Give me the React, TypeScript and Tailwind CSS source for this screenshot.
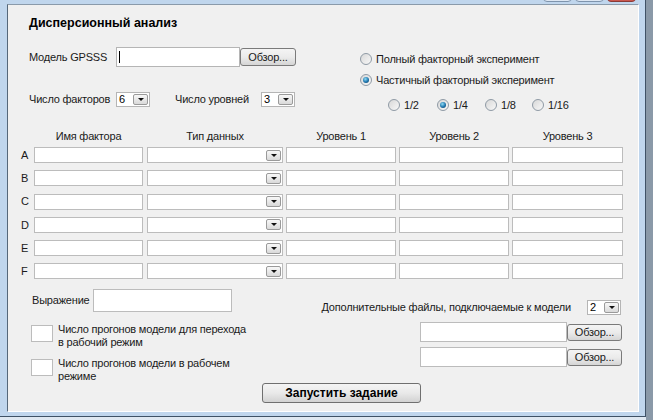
import React from "react";

const font = "font-['Liberation_Sans',Arial,sans-serif]";

function DropBtn() {
    return (
        <div className="w-[15px] h-[11px] mr-[1px] ml-auto border border-[#9a9a9a] rounded-[2px] bg-linear-to-b from-[#f8f8f8] to-[#d9d9d9] flex items-center justify-center">
            <div className="w-0 h-0 border-l-[3px] border-r-[3px] border-t-[3px] border-l-transparent border-r-transparent border-t-[#111]" />
        </div>
    );
}

function SmallCombo({ value }: { value: string }) {
    return (
        <div className="w-[34px] h-[15px] border border-[#b5b5b5] bg-white flex items-center pl-[2px] text-[11px] leading-none text-black">
            {value}
            <DropBtn />
        </div>
    );
}

function Radio({ checked }: { checked?: boolean }) {
    return (
        <div className="w-[12px] h-[12px] shrink-0 rounded-full border border-[#8f9aa5] bg-linear-to-br from-[#d8d8d8] to-[#f8f8f8] flex items-center justify-center">
            {checked && (
                <div className="w-[6px] h-[6px] rounded-full bg-[radial-gradient(circle_at_40%_35%,#8fdcf5,#1d74ad_55%,#0c3556)]" />
            )}
        </div>
    );
}

function Browse({ className }: { className: string }) {
    return (
        <div className={"border border-[#7a7a7a] rounded-[3px] bg-linear-to-b from-[#f4f4f4] via-[#ebebeb] to-[#d5d5d5] flex items-center justify-center text-[11px] text-[#1a1a1a] " + className}>
            Обзор...
        </div>
    );
}

const rows = ["A", "B", "C", "D", "E", "F"];

export default function App() {
    return (
        <div className={`w-[653px] h-[420px] bg-[#dfe8f1] overflow-hidden flex items-start ${font}`}>
            {/* window */}
            <div className="w-[646px] h-[417px] shrink-0 bg-[#c0d6ed] border-r border-b border-[#3f5266] pl-[7px] pr-[6px] pb-[4px] flex flex-col">
                {/* title bar remains */}
                <div className="h-[4px] overflow-hidden flex items-end">
                    <div className="ml-auto mr-[3px] mb-[2px] flex gap-[3px]">
                        <div className="w-[29px] h-[18px] rounded-b-[4px] border border-[#7e94ad] bg-[#dce6f2]" />
                        <div className="w-[29px] h-[18px] rounded-b-[4px] border border-[#7e94ad] bg-[#dce6f2]" />
                        <div className="w-[29px] h-[18px] rounded-b-[4px] border border-[#8a3a36] bg-[#c9574f]" />
                    </div>
                </div>

                {/* client area */}
                <div className="flex-1 flex flex-col bg-[#f0f0f0] border-l border-t border-l-[#56687a] border-t-[#8a9aaa] border-r border-b border-r-white border-b-white text-[11px] tracking-[-0.2px] text-[#1a1a1a]">
                    {/* top section */}
                    <div className="flex">
                        <div className="w-[288px] pl-[21px] flex flex-col">
                            <div className="mt-[10px] h-[16px] leading-[16px] text-[12.5px] tracking-normal font-bold text-black">Дисперсионный анализ</div>
                            <div className="mt-[16px] h-[20px] flex items-center">
                                <div className="w-[87px]">Модель GPSSS</div>
                                <div className="w-[124px] h-[20px] bg-white border border-[#b5b5b5] flex items-center pl-[2px]">
                                    <div className="w-[1px] h-[12px] bg-black" />
                                </div>
                                <Browse className="w-[56px] h-[18px]" />
                            </div>
                            <div className="mt-[24px] h-[16px] flex items-center">
                                <div className="w-[87px]">Число факторов</div>
                                <SmallCombo value="6" />
                                <div className="ml-[25px] w-[86px]">Число уровней</div>
                                <SmallCombo value="3" />
                            </div>
                        </div>
                        <div className="ml-[64px] mt-[46px] flex flex-col">
                            <div className="h-[16px] flex items-center gap-[4px]">
                                <Radio />
                                <span>Полный факторный эксперимент</span>
                            </div>
                            <div className="mt-[5px] h-[16px] flex items-center gap-[4px]">
                                <Radio checked />
                                <span>Частичный факторный эксперимент</span>
                            </div>
                            <div className="mt-[9px] ml-[28px] h-[16px] flex items-center">
                                <div className="w-[49px] flex items-center gap-[4px]"><Radio /><span>1/2</span></div>
                                <div className="w-[48px] flex items-center gap-[4px]"><Radio checked /><span>1/4</span></div>
                                <div className="w-[47px] flex items-center gap-[4px]"><Radio /><span>1/8</span></div>
                                <div className="flex items-center gap-[4px]"><Radio /><span>1/16</span></div>
                            </div>
                        </div>
                    </div>

                    {/* factor table */}
                    <div className="mt-[16px] pl-[13px] flex flex-col">
                        <div className="h-[14px] flex items-center">
                            <div className="w-[13px]" />
                            <div className="w-[109px] text-center">Имя фактора</div>
                            <div className="ml-[4px] w-[136px] text-center">Тип данных</div>
                            <div className="ml-[3px] w-[110px] text-center">Уровень 1</div>
                            <div className="ml-[3px] w-[110px] text-center">Уровень 2</div>
                            <div className="ml-[3px] w-[111px] text-center">Уровень 3</div>
                        </div>
                        <div className="mt-[4px] flex flex-col gap-[7.25px]">
                            {rows.map((r) => (
                                <div key={r} className="h-[16px] flex items-center">
                                    <div className="w-[13px]">{r}</div>
                                    <div className="w-[109px] h-[16px] bg-white border border-[#bcbcbc]" />
                                    <div className="ml-[4px] w-[136px] h-[16px] bg-white border border-[#bcbcbc] flex items-center">
                                        <DropBtn />
                                    </div>
                                    <div className="ml-[3px] w-[110px] h-[16px] bg-white border border-[#bcbcbc]" />
                                    <div className="ml-[3px] w-[110px] h-[16px] bg-white border border-[#bcbcbc]" />
                                    <div className="ml-[3px] w-[111px] h-[16px] bg-white border border-[#bcbcbc]" />
                                </div>
                            ))}
                        </div>
                    </div>

                    {/* bottom section */}
                    <div className="mt-[9.75px] flex">
                        <div className="w-[250px] pl-[23px] flex flex-col">
                            <div className="h-[23px] flex items-center">
                                <div className="w-[62px] pl-[1px]">Выражение</div>
                                <div className="w-[139px] h-[23px] bg-white border border-[#bcbcbc]" />
                            </div>
                            <div className="mt-[10.5px] flex items-start">
                                <div className="mt-[2.5px] w-[22px] h-[17px] shrink-0 bg-white border border-[#bcbcbc]" />
                                <div className="ml-[5px] leading-[13px]">Число прогонов модели для перехода<br />в рабочий режим</div>
                            </div>
                            <div className="mt-[8px] flex items-start">
                                <div className="mt-[2.5px] w-[22px] h-[17px] shrink-0 bg-white border border-[#bcbcbc]" />
                                <div className="ml-[5px] leading-[13px]">Число прогонов модели в рабочем<br />режиме</div>
                            </div>
                        </div>
                        <div className="flex-1 pr-[16px] pt-[10px] flex flex-col items-end">
                            <div className="h-[16px] flex items-center">
                                <span>Дополнительные файлы, подключаемые к модели</span>
                                <div className="ml-[16px] mr-[1px]"><SmallCombo value="2" /></div>
                            </div>
                            <div className="mt-[7px] h-[20px] flex items-center">
                                <div className="w-[147px] h-[20px] bg-white border border-[#bcbcbc]" />
                                <Browse className="w-[55px] h-[17px]" />
                            </div>
                            <div className="mt-[5px] h-[20px] flex items-center">
                                <div className="w-[147px] h-[20px] bg-white border border-[#bcbcbc]" />
                                <Browse className="w-[55px] h-[17px]" />
                            </div>
                        </div>
                    </div>

                    <div className="mt-[0.5px] ml-[254px] w-[159px] h-[20px] border border-[#6f6f6f] rounded-[3px] bg-linear-to-b from-[#f4f4f4] via-[#e9e9e9] to-[#d2d2d2] flex items-center justify-center text-[12px] tracking-normal font-bold text-black">
                        Запустить задание
                    </div>
                </div>
            </div>
            {/* desktop behind the window */}
            <div className="w-[7px] h-[420px] bg-[#8a99a8]" />
        </div>
    );
}
